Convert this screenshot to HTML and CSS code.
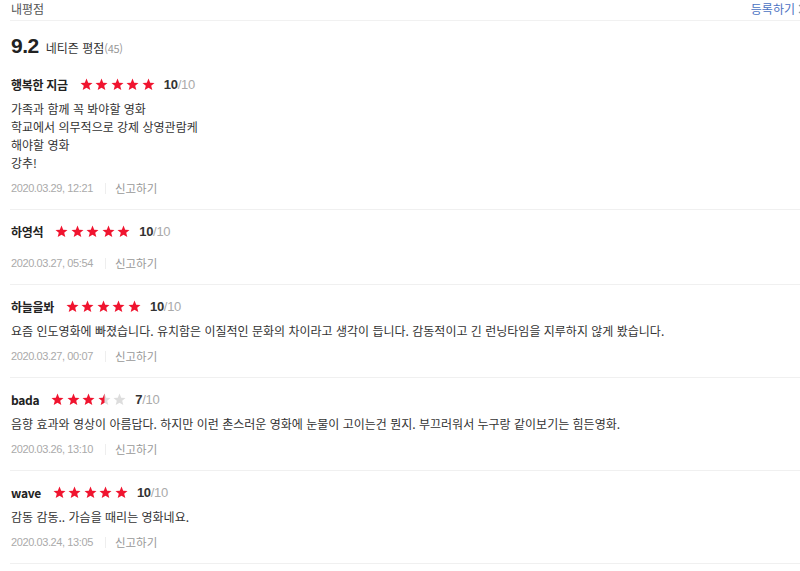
FILE: index.html
```html
<!DOCTYPE html>
<html lang="ko">
<head>
    <meta charset="UTF-8">
    <title>내평점</title>
    <link rel="stylesheet" href="styles.css">
</head>
<body>
    <div class="rating-box">
        <div class="top-bar">
            <span class="top-title">내평점</span>
            <a class="write-link" href="#">등록하기<svg class="chev" viewBox="0 0 6 10" width="6" height="10"><path d="M1 1l4 4-4 4" fill="none" stroke="#999" stroke-width="1.2"/></svg></a>
        </div>

        <div class="score-line">
            <span class="score-num">9.2</span>
            <span class="score-label">네티즌 평점</span><span class="score-count">(45)</span>
        </div>

        <ul class="review-list">
            <li class="review">
                <div class="review-head">
                    <span class="nick">행복한 지금</span>
                    <span class="stars" data-score="10"></span>
                    <span class="point"><b>10</b>/10</span>
                </div>
                <p class="review-text">가족과 함께 꼭 봐야할 영화<br>학교에서 의무적으로 강제 상영관람케<br>해야할 영화<br>강추!</p>
                <div class="review-meta">
                    <span class="date">2020.03.29, 12:21</span>
                    <a class="report" href="#">신고하기</a>
                </div>
            </li>
            <li class="review">
                <div class="review-head">
                    <span class="nick">하영석</span>
                    <span class="stars" data-score="10"></span>
                    <span class="point"><b>10</b>/10</span>
                </div>
                <p class="review-text"></p>
                <div class="review-meta">
                    <span class="date">2020.03.27, 05:54</span>
                    <a class="report" href="#">신고하기</a>
                </div>
            </li>
            <li class="review">
                <div class="review-head">
                    <span class="nick">하늘을봐</span>
                    <span class="stars" data-score="10"></span>
                    <span class="point"><b>10</b>/10</span>
                </div>
                <p class="review-text">요즘 인도영화에 빠졌습니다. 유치함은 이질적인 문화의 차이라고 생각이 듭니다. 감동적이고 긴 런닝타임을 지루하지 않게 봤습니다.</p>
                <div class="review-meta">
                    <span class="date">2020.03.27, 00:07</span>
                    <a class="report" href="#">신고하기</a>
                </div>
            </li>
            <li class="review">
                <div class="review-head">
                    <span class="nick">bada</span>
                    <span class="stars" data-score="7"></span>
                    <span class="point"><b>7</b>/10</span>
                </div>
                <p class="review-text">음향 효과와 영상이 아름답다. 하지만 이런 촌스러운 영화에 눈물이 고이는건 뭔지. 부끄러워서 누구랑 같이보기는 힘든영화.</p>
                <div class="review-meta">
                    <span class="date">2020.03.26, 13:10</span>
                    <a class="report" href="#">신고하기</a>
                </div>
            </li>
            <li class="review">
                <div class="review-head">
                    <span class="nick">wave</span>
                    <span class="stars" data-score="10"></span>
                    <span class="point"><b>10</b>/10</span>
                </div>
                <p class="review-text">감동 감동.. 가슴을 때리는 영화네요.</p>
                <div class="review-meta">
                    <span class="date">2020.03.24, 13:05</span>
                    <a class="report" href="#">신고하기</a>
                </div>
            </li>
        </ul>
    </div>

    <script>
        // draw 5 stars per review, score is out of 10 (2 points = 1 star)
        const starPath = 'M6.5 0.6l1.7 4.1 4.3 0.3-3.3 2.8 1.1 4.3-3.8-2.4-3.8 2.4 1.1-4.3-3.3-2.8 4.3-0.3z';

        document.querySelectorAll('.stars').forEach(function(el, n) {
            const score = parseInt(el.dataset.score, 10);
            let html = '';
            for (let i = 0; i < 5; i++) {
                const fill = Math.max(0, Math.min(2, score - i * 2)); // 0, 1 (half) or 2
                const id = 'half-' + n + '-' + i;
                html += '<svg class="star" viewBox="0 0 13 13" width="13" height="13">';
                if (fill === 1) {
                    html += '<defs><clipPath id="' + id + '"><rect x="0" y="0" width="6.5" height="13"/></clipPath></defs>';
                    html += '<path d="' + starPath + '" fill="#ddd"/>';
                    html += '<path d="' + starPath + '" fill="#f0142f" clip-path="url(#' + id + ')"/>';
                } else {
                    html += '<path d="' + starPath + '" fill="' + (fill === 2 ? '#f0142f' : '#ddd') + '"/>';
                }
                html += '</svg>';
            }
            el.innerHTML = html;
        });
    </script>
</body>
</html>
```

FILE: styles.css
```css
body {
    margin: 0;
    font-family: "Noto Sans CJK KR", "Noto Sans", sans-serif;
    color: #333;
    background: #fff;
    overflow: hidden;
}

a {
    text-decoration: none;
}

.rating-box {
    padding-left: 10px;
}

.top-bar {
    display: flex;
    justify-content: space-between;
    align-items: center;
    height: 23px;
    border-bottom: 1px solid #f1f1f1;
    margin-top: -3px;
}
.top-title {
    font-size: 12px;
    color: #555;
    padding-left: 1px;
}
.write-link {
    display: flex;
    align-items: center;
    gap: 3px;
    font-size: 12px;
    color: #4a72c2;
    margin-right: -4px;
    white-space: nowrap;
}
.chev {
    display: block;
}

.score-line {
    display: flex;
    align-items: baseline;
    padding: 13px 0 0 1px;
    height: 30px;
}
.score-num {
    font-family: "Liberation Sans", Arial, sans-serif;
    font-size: 21px;
    font-weight: bold;
    color: #222;
    margin-right: 7px;
    letter-spacing: -0.5px;
}
.score-label {
    font-size: 12px;
    color: #333;
}
.score-count {
    font-size: 11px;
    color: #999;
    letter-spacing: -0.3px;
}

.review-list {
    list-style: none;
    margin: 0;
    padding: 0;
}
.review {
    display: flex;
    flex-direction: column;
    padding: 12px 0 12px 1px;
    border-bottom: 1px solid #f0f0f0;
}
.review:first-child {
    padding-top: 11px;
}

.review-head {
    display: flex;
    align-items: center;
    height: 18px;
}
.nick {
    font-size: 12px;
    font-weight: bold;
    color: #222;
    margin-right: 12px;
    letter-spacing: -0.3px;
}
.stars {
    display: flex;
    gap: 2.5px;
    margin-right: 9px;
}
.star {
    display: block;
}
.point {
    font-family: "Liberation Sans", Arial, sans-serif;
    font-size: 13px;
    color: #aaa;
    letter-spacing: -0.3px;
}
.point b {
    color: #333;
}

.review-text {
    margin: 7px 0;
    font-size: 12px;
    line-height: 18px;
    color: #333;
}

.review-meta {
    display: flex;
    align-items: center;
    height: 18px;
}
.date {
    font-family: "Liberation Sans", Arial, sans-serif;
    font-size: 11px;
    color: #aaa;
    letter-spacing: -0.4px;
    padding-right: 12px;
    border-right: 1px solid #eee;
    line-height: 11px;
}
.report {
    font-size: 11.5px;
    color: #999;
    padding-left: 9px;
}
```
